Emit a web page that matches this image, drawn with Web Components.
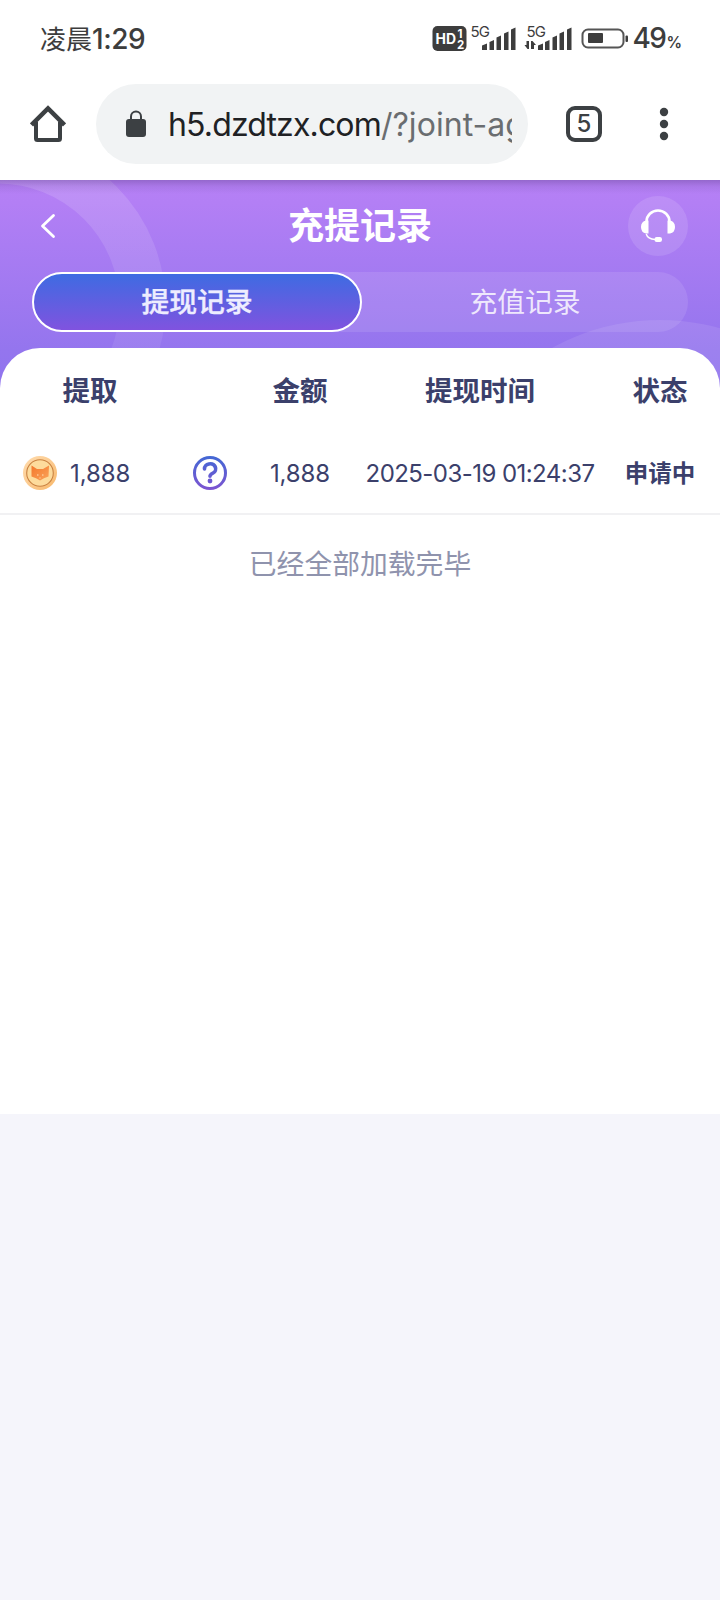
<!DOCTYPE html>
<html lang="zh-CN">
<head>
<meta charset="utf-8">
<title>充提记录</title>
<style>
body{margin:0;background:#f5f5fb;font-family:Inter,"Noto Sans CJK SC",sans-serif;color:#3b406b}
</style>
</head>
<body>
<phone-page></phone-page>
<script>
const define=(name,html)=>customElements.define(name,class extends HTMLElement{
  constructor(){super();this.attachShadow({mode:'open'}).innerHTML=html;}
});

define('status-bar',`
<style>
:host{display:flex;height:78px;box-sizing:border-box;padding:0 38px 0 40px;align-items:center;color:#3d3d3d;background:#fff}
.time{font-size:26px;flex:1;font-weight:500;white-space:nowrap;line-height:40px}
.cn{font-weight:400}.num{font-size:28px;letter-spacing:-.5px;font-weight:500}
svg{display:block;flex:none}
.bat{font-size:28px;font-weight:500;letter-spacing:-1.5px;line-height:40px;margin:2px 0 0 4px;white-space:nowrap}
.pc{font-size:15.500px;letter-spacing:0;font-weight:600;margin-left:1px}
text{font-family:Inter,sans-serif}
</style>
<div class="time"><span class="cn">凌晨</span><span class="num">1:29</span></div>
<svg width="196" height="36" viewBox="432 21 196 36" fill="#3d3d3d">
<rect x="432.500" y="26" width="34" height="25" rx="5"/>
<g fill="#fff" font-weight="700"><text x="435.500" y="44" font-size="14" textLength="20.500" lengthAdjust="spacingAndGlyphs">HD</text><text x="457.500" y="37.500" font-size="11.500">1</text><text x="457" y="48.500" font-size="11.500">2</text></g>
<text x="470.500" y="37" font-size="15" textLength="19.500">5G</text>
<path d="M482 45.500l5-2V50h-5zM489.500 42l4.500-2V50h-4.500zM496.500 37.500l4.500-2V50h-4.500zM504 33.500l4.500-2V50H504zM511 29.500l4.500-2V50H511z"/>
<text x="526.500" y="37" font-size="15" textLength="19.500">5G</text>
<path d="M538 45.500l5-2V50h-5zM545 42l4.500-2V50H545zM552.500 37.500l4.500-2V50h-4.500zM559.500 33.500l4.500-2V50h-4.500zM567 29.500l4.500-2V50H567zM524.500 45h2v-4h2.500v8h-1.500zM531 41h1.500l3.500 4h-2v4h-3z"/>
<rect x="582.500" y="29.500" width="41" height="18" rx="5.500" fill="none" stroke="#555" stroke-width="2"/>
<rect x="588" y="33" width="15" height="10" rx="1"/><rect x="625.500" y="35.500" width="2.500" height="6.500" rx="1"/>
</svg>
<div class="bat">49<span class="pc">%</span></div>`);

define('browser-bar',`
<style>
:host{display:flex;height:102px;box-sizing:border-box;padding:6px 32px 0 30px;align-items:flex-start;background:#fff}
svg{display:block;flex:none}
.home{margin:21px 0 0}
.url{display:flex;align-items:center;width:432px;height:80px;margin-left:30px;border-radius:40px;background:#f1f3f4;box-sizing:border-box;padding:0 16px 0 30px;flex:none}
.addr{margin:2px 0 0 22px;flex:1;overflow:hidden;white-space:nowrap;font-size:32px;line-height:48px;letter-spacing:-.85px;color:#202124}
.addr span{color:#6a6d70;letter-spacing:.05px}
.tabs{margin:22px 0 0 38px;width:36px;height:36px;box-sizing:border-box;border:4px solid #3c4043;border-radius:9px;font-size:24px;font-weight:500;color:#3c4043;text-align:center;line-height:28px}
.menu{margin:21px 0 0 50px}
</style>
<svg class="home" width="36" height="38" viewBox="0 0 36 38" fill="none" stroke="#3c4043" stroke-width="4" stroke-linejoin="round"><path d="M1.500 20L18 3.500 34.500 20" stroke-width="4.500" stroke-linejoin="miter"/><path d="M6 17v16.500q0 1.500 1.500 1.500h21q1.500 0 1.500-1.500V17"/></svg>
<div class="url">
<svg width="20" height="28" viewBox="0 0 20 28"><rect y="9" width="20" height="18" rx="3" fill="#3c4043"/><path d="M5 10V6.500a5 5 0 0 1 10 0V10" fill="none" stroke="#3c4043" stroke-width="2"/></svg>
<div class="addr">h5.dzdtzx.com<span>/?joint-ag</span></div>
</div>
<div class="tabs">5</div>
<svg class="menu" width="24" height="38" viewBox="0 0 24 38" fill="#3c4043"><circle cx="12" cy="7" r="4.200"/><circle cx="12" cy="19" r="4.200"/><circle cx="12" cy="31" r="4.200"/></svg>`);

define('record-tabs',`
<style>
:host{display:grid;grid-template-columns:330px 326px;height:60px;margin:0 32px;border-radius:30px;background:rgba(255,255,255,.1)}
div{display:flex;align-items:center;justify-content:center;font-size:27.8px;line-height:40px;color:rgba(255,255,255,.82);box-sizing:border-box}
.on{border:2px solid #fff;border-radius:30px;background:linear-gradient(#3e6be2,#8053df);font-weight:500;color:#eeedff;-webkit-text-stroke:.4px #eeedff}
</style>
<div class="on">提现记录</div><div>充值记录</div>`);

define('page-header',`
<style>
:host{display:grid;height:218px;background:linear-gradient(#b680f6,#b37ff5 10%,#9475ee 78%,#8e73ee)}
:host>*{grid-area:1/1}
.bg{display:block}
.top{display:grid;grid-template-columns:60px 1fr 60px;align-items:center;height:60px;margin:16px 32px}
h1{margin:0;font-size:36px;line-height:52px;font-weight:700;color:#fff;text-align:center}
svg{display:block}
</style>
<svg class="bg" width="720" height="218" viewBox="0 180 720 218">
<defs><linearGradient id="shade" x2="0" y2="1"><stop stop-color="#55397f" stop-opacity=".35"/><stop offset=".45" stop-color="#55397f" stop-opacity=".12"/><stop offset="1" stop-color="#55397f" stop-opacity="0"/></linearGradient>
<linearGradient id="ring" gradientUnits="userSpaceOnUse" x1="0" y1="180" x2="0" y2="350"><stop stop-color="#fff" stop-opacity=".14"/><stop offset="1" stop-color="#fff" stop-opacity=".07"/></linearGradient></defs>
<circle cx="-2" cy="305" r="144.500" fill="none" stroke="url(#ring)" stroke-width="46"/>
<circle cx="660" cy="543" r="223" fill="#fff" opacity=".09"/>
<rect y="180" width="720" height="14" fill="url(#shade)"/>
</svg>
<div>
<div class="top">
<svg width="60" height="60" viewBox="32 196 60 60"><path d="M53.500 215.500L42.500 226l11 10.500" fill="none" stroke="#fff" stroke-width="2.800" stroke-linecap="round" stroke-linejoin="round"/></svg>
<h1>充提记录</h1>
<svg width="60" height="60" viewBox="628 196 60 60"><circle cx="658" cy="226" r="30" fill="#fff" opacity=".12"/><path d="M646.500 223v-1.500a11.500 11 0 0 1 23 0v1.500" fill="none" stroke="#fff" stroke-width="2.600"/><path d="M648.500 220.500v13h-2.500q-5-1-5-6.500t5-6.500zM667.500 220.500v13h2.500q5-1 5-6.500t-5-6.500z" fill="#fff"/><path d="M646.200 234q1.500 5 9 5.500" fill="none" stroke="#fff" stroke-width="1.400"/><rect x="654.500" y="237" width="7.500" height="5" rx="2.200" fill="#fff"/></svg>
</div>
<record-tabs></record-tabs>
</div>`);

define('record-table',`
<style>
:host{display:block;height:766px;margin-top:-50px;position:relative;background:#fff;border-radius:40px 40px 0 0}
.row{display:grid;grid-template-columns:180px 60px 120px 240px 120px;align-items:center;justify-items:center;white-space:nowrap;box-sizing:border-box}
.head{height:84px;font-size:27.500px;font-weight:700;line-height:40px}
.item{height:83px;border-bottom:2px solid #f1f1f3;font-size:24px;font-weight:400;line-height:36px;letter-spacing:-.1px}
.coin{display:flex;align-items:center;justify-self:start;margin-left:22px}
.coin span{margin-left:12px}
.date{letter-spacing:-.55px}
span{position:relative;top:1px}
svg{display:block}
.st{font-weight:700;font-size:23.500px;letter-spacing:0}
.done{margin-top:29px;text-align:center;font-size:27.800px;line-height:40px;color:#8f93ad}
</style>
<div class="row head"><span>提取</span><i></i><span>金额</span><span>提现时间</span><span>状态</span></div>
<div class="row item">
<div class="coin"><svg width="36" height="36" viewBox="0 0 36 36"><defs><linearGradient id="g" x2="1" y2="1"><stop stop-color="#ffdcae"/><stop offset=".5" stop-color="#fccb90"/><stop offset="1" stop-color="#f8b768"/></linearGradient><linearGradient id="f" x2="1" y2="1"><stop stop-color="#f4772b"/><stop offset="1" stop-color="#faa35a"/></linearGradient></defs><circle cx="18" cy="18" r="17" fill="url(#g)"/><circle cx="18" cy="18" r="13.300" fill="#fddb9c" stroke="#c98242" stroke-width="1.100"/><path d="M9.500 10.500l5.500 3.500h6l6-3.500-.5 11-4.500 1.800-4 2.200-4-2.200-4.500-1.800z" fill="url(#f)"/><path d="M15 20h1.500M20 20h1.500M17.500 23h1" stroke="#ffe4bb" stroke-width="1"/></svg><span>1,888</span></div>
<svg width="36" height="36" viewBox="0 0 36 36"><defs><linearGradient id="q" gradientUnits="userSpaceOnUse" x1="0" y1="1" x2="0" y2="35"><stop stop-color="#4268d4"/><stop offset="1" stop-color="#7d54d1"/></linearGradient></defs><circle cx="18" cy="18" r="15.500" fill="none" stroke="url(#q)" stroke-width="3"/><path d="M12.500 14a5.600 5 0 1 1 8.600 4q-3.100 1.700-3.100 3.200" fill="none" stroke="url(#q)" stroke-width="3.600" stroke-linecap="round"/><circle cx="18" cy="26" r="2.400" fill="#6c59d2"/></svg>
<span>1,888</span><span class="date">2025-03-19 01:24:37</span><span class="st">申请中</span>
</div>
<div class="done">已经全部加载完毕</div>`);

define('phone-page',`
<style>:host{display:block;width:720px;height:1600px;overflow:hidden}</style>
<status-bar></status-bar><browser-bar></browser-bar><page-header></page-header><record-table></record-table>`);
</script>
</body>
</html>
